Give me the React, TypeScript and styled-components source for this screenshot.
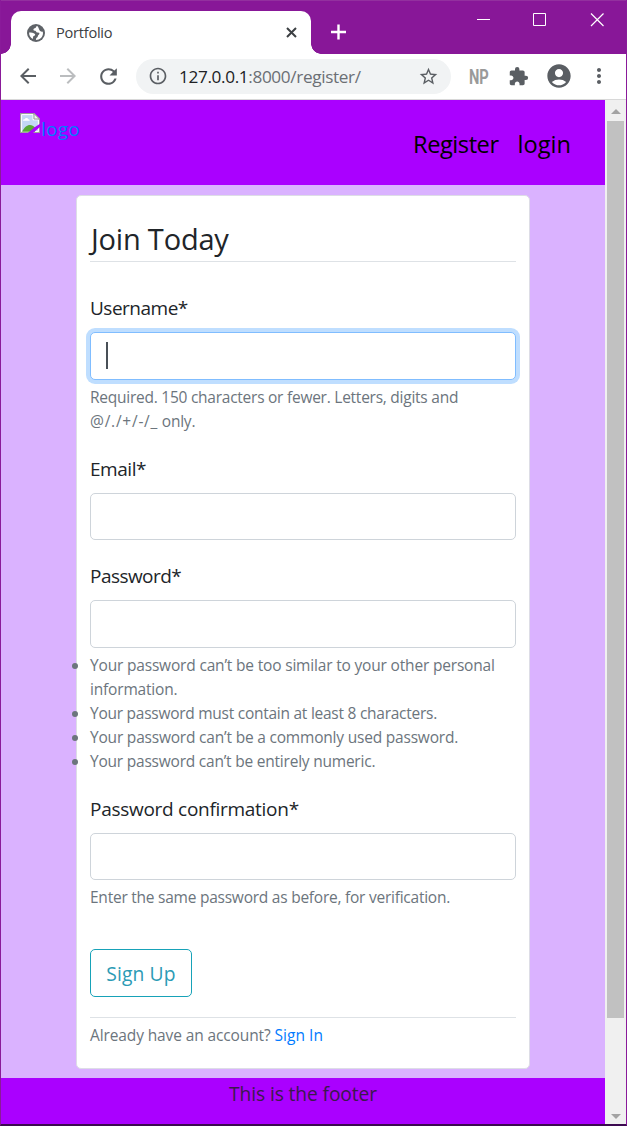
import React from 'react';
import styled, { createGlobalStyle } from 'styled-components';
import {
  MdAccountCircle,
  MdArrowBack,
  MdArrowForward,
  MdExtension,
  MdInfoOutline,
  MdMoreVert,
  MdRefresh,
  MdStarBorder,
} from 'react-icons/md';

const GlobalStyle = createGlobalStyle`
  * { box-sizing: border-box; }
  body {
    margin: 0;
    font-family: "Open Sans", "Noto Sans", sans-serif;
    color: #212529;
  }
  svg { display: block; flex: none; }
`;

const Window = styled.div`
  display: flex;
  flex-direction: column;
  width: 627px;
  height: 1126px;
  overflow: hidden;
  background: #881798;
  border: solid #8a1a9a;
  border-width: 0 1px;
  border-bottom: 2px solid #3c0a50;
`;

const TitleBar = styled.div`
  display: flex;
  height: 54px;
  padding-left: 10px;
  border-top: 1px solid #93309f;
`;

const Tab = styled.div`
  position: relative;
  display: flex;
  align-items: center;
  width: 300px;
  height: 43px;
  margin-top: 10px;
  padding: 0 14px;
  background: #fff;
  border-radius: 10px 10px 0 0;

  &::before,
  &::after {
    content: '';
    position: absolute;
    bottom: 0;
    width: 10px;
    height: 10px;
  }
  &::before {
    left: -10px;
    background: radial-gradient(circle at 0 0, transparent 9.5px, #fff 10px);
  }
  &::after {
    right: -10px;
    background: radial-gradient(circle at 100% 0, transparent 9.5px, #fff 10px);
  }
`;

const GlobeSlot = styled.span`
  margin: 0 2px;
`;

const TabTitle = styled.span`
  flex: 1;
  margin-left: 9px;
  padding-bottom: 2px;
  font-size: 14.6px;
  letter-spacing: -0.25px;
  color: #3c4043;
`;

const NewTab = styled.div`
  margin: 23px 0 0 19px;
`;

const Controls = styled.div`
  display: flex;
  gap: 42px;
  margin: 12px 21px 0 auto;
`;

const Toolbar = styled.div`
  display: flex;
  align-items: center;
  height: 46px;
  padding: 0 0 1px 15px;
  background: #fff;
  border-bottom: 1px solid #d8d8d8;
  color: #5a5e63;
`;

const NavButtons = styled.div`
  display: flex;
  align-items: center;
  gap: 16px;
`;

const AddressBar = styled.div`
  display: flex;
  align-items: center;
  width: 315px;
  height: 35px;
  margin-left: 15px;
  padding: 0 12px;
  border-radius: 18px;
  background: #f1f3f4;
`;

const Url = styled.span`
  flex: 1;
  margin-left: 11px;
  padding-top: 2px;
  font-size: 17.2px;
  line-height: 24px;
  letter-spacing: -0.36px;
  color: #6b6f74;
`;

const Host = styled.span`
  color: #202124;
`;

const Extensions = styled.div`
  display: flex;
  align-items: center;
  margin-left: 18px;
`;

const NpBadge = styled.span`
  width: 21px;
  margin-right: 18px;
  padding-top: 2px;
  font-family: "Roboto", sans-serif;
  font-size: 21px;
  font-weight: 700;
  line-height: 24px;
  color: #9a9a9a;
  transform: scaleX(0.7);
  transform-origin: left;
`;

const ProfileButton = styled.span`
  margin-left: 16px;
`;

const MenuButton = styled.span`
  margin-left: 14px;
`;

const Viewport = styled.div`
  display: flex;
  height: 1024px;
`;

const Page = styled.div`
  display: flex;
  flex-direction: column;
  width: 604px;
  background: #dab2ff;
`;

const Header = styled.header`
  display: flex;
  justify-content: space-between;
  height: 85px;
  padding: 13px 34px 0 19px;
  background: #aa00ff;
`;

const Logo = styled.a`
  display: flex;
  gap: 1px;
  font-size: 19px;
  line-height: 32px;
  letter-spacing: 0.25px;
  color: #007bff;
`;

const Nav = styled.nav`
  display: flex;
  gap: 19px;
  padding-top: 13px;
  font-size: 23.6px;
  line-height: 36px;
  color: #000;
`;

const NavLink = styled.a<{ $spacing: number }>`
  letter-spacing: ${(p) => p.$spacing}px;
`;

const Card = styled.main`
  width: 454px;
  height: 874px;
  margin: 10px 0 9px 75px;
  padding: 24px 13px 0;
  background: #fff;
  border: 1px solid #dddde6;
  border-radius: 5px;
`;

const Title = styled.h1`
  height: 42px;
  margin: 0 0 30px;
  padding-left: 1px;
  border-bottom: 1px solid #dee2e6;
  font-size: 29px;
  font-weight: 400;
  line-height: 38px;
  letter-spacing: -0.2px;
`;

const Field = styled.div<{ $gap: number }>`
  margin-bottom: ${(p) => p.$gap}px;
`;

const Label = styled.label<{ $spacing: number }>`
  display: block;
  height: 40px;
  padding-top: 1px;
  font-size: 19px;
  line-height: 30px;
  letter-spacing: ${(p) => p.$spacing}px;
`;

const Input = styled.div<{ $focused?: boolean; $height: number }>`
  display: flex;
  align-items: center;
  height: ${(p) => p.$height}px;
  padding: 0 15px;
  background: #fff;
  border: 1px solid ${(p) => (p.$focused ? '#80bdff' : '#ced4da')};
  border-radius: 5px;
  box-shadow: ${(p) => (p.$focused ? '0 0 0 4px #bfdeff' : 'none')};
`;

const Caret = styled.span`
  width: 2px;
  height: 27px;
  margin-bottom: 2px;
  background: #495057;
`;

const Help = styled.p<{ $spacing: number }>`
  margin: 5px 0 0;
  font-size: 15.5px;
  line-height: 24px;
  letter-spacing: ${(p) => p.$spacing}px;
  color: #6c757d;
`;

const Symbols = styled.span`
  letter-spacing: 0.75px;
`;

const Rules = styled.ul`
  margin: 5px 0 0;
  padding: 0;
  list-style: none;
  font-size: 15.5px;
  line-height: 24px;
  color: #6c757d;
`;

const Rule = styled.li<{ $spacing: number }>`
  display: flex;
  letter-spacing: ${(p) => p.$spacing}px;

  &::before {
    content: '';
    flex: none;
    width: 6px;
    height: 6px;
    margin: 10px 12px 0 -18px;
    border-radius: 50%;
    background: #6c757d;
  }
`;

const SubmitButton = styled.button`
  display: block;
  width: 102px;
  height: 48px;
  padding: 1px 0 0;
  background: #fff;
  border: 1px solid #17a2b8;
  border-radius: 5px;
  font: 400 19.3px/30px "Open Sans", "Noto Sans", sans-serif;
  letter-spacing: 0.1px;
  color: #2b9bb5;
`;

const SignIn = styled.div`
  margin-top: 20px;
  padding-top: 5px;
  border-top: 1px solid #dee2e6;
  font-size: 15.5px;
  line-height: 24px;
  letter-spacing: -0.12px;
  color: #6c757d;

  a {
    letter-spacing: 0.05px;
    color: #007bff;
  }
`;

const Footer = styled.footer`
  flex: 1;
  padding-top: 1px;
  background: #aa00ff;
  font-size: 19.2px;
  line-height: 30px;
  letter-spacing: -0.1px;
  text-align: center;
  color: #3a1a4c;
`;

const ScrollBar = styled.div`
  display: flex;
  flex-direction: column;
  align-items: center;
  justify-content: space-between;
  width: 21px;
  padding: 9px 0 5px;
  background: #f0f0f0;
`;

const Thumb = styled.div`
  width: 17px;
  height: 897px;
  margin: 7px 0 auto;
  background: #c1c1c1;
`;

const BrokenImage = () => (
  <svg width="20" height="20" viewBox="0 0 20 20">
    <path d="M0.6 0.6H14L19.4 6V19.4H0.6Z" fill="#c3d6f5" stroke="#9a9a9a" strokeWidth="1.2" />
    <path d="M1.6 1.6H13V6.8H18.4V18.6H1.6Z" fill="none" stroke="#fff" strokeWidth="1" />
    <path d="M3 7.8C3 6.5 4 6.1 4.8 6.3C5.2 4.5 7.8 4.4 8.2 6.2C9.4 6 9.8 7 9.6 7.8Z" fill="#fff" />
    <path d="M2 18.8C4 14.5 7 12 10 12C12 12 13.5 13 15 14.5V18.8Z" fill="#58a935" />
    <path d="M14 0.6V6H19.4Z" fill="#f4f4f4" stroke="#9a9a9a" />
    <path d="M20.2 10.5V13.8L12.8 20.2H7.6L14.6 14.2Z" fill="#aa00ff" />
  </svg>
);

const Globe = () => (
  <svg width="18" height="18" viewBox="0 0 18 18">
    <circle cx="9" cy="9" r="9" fill="#5f6368" />
    <path
      d="M10.3 2.1C9 2.2 9.2 3.5 8.4 4C7.4 4.5 6.5 4.6 6.4 5.7C6.4 6.7 7.5 6.5 8.3 6.7C9.4 7 9 8.3 10.2 8.6C11.5 8.9 12.2 8.4 12.4 9.5C12.5 10.7 11 10.9 10.9 12C10.8 12.9 10.3 13.4 9.6 13.8C8.9 14.3 9.2 15.2 8.9 16C13 16 16 12.9 16 9L15.7 7.5C14.5 8 13.4 7.4 12.7 6.5C11.8 5.5 11.9 3.8 10.3 2.1Z"
      fill="#fff"
    />
    <path
      d="M2.1 8.5C4 8.5 6.8 8.7 7.9 10C8.7 11.1 7.7 11.8 6.7 12.1C6 12.4 6.3 13.5 5.7 14.9C3.3 13.7 1.9 11.3 2.1 8.5Z"
      fill="#fff"
    />
  </svg>
);

const TabClose = () => (
  <svg width="11" height="11" viewBox="0 0 11 11" stroke="#3c4043" strokeWidth="2">
    <path d="M1 1L10 10M10 1L1 10" />
  </svg>
);

export default function App() {
  return (
    <>
      <GlobalStyle />
      <Window>
        <TitleBar>
          <Tab>
            <GlobeSlot>
              <Globe />
            </GlobeSlot>
            <TabTitle>Portfolio</TabTitle>
            <TabClose />
          </Tab>
          <NewTab>
            <svg width="16" height="16" viewBox="0 0 16 16" stroke="#fff" strokeWidth="2.4">
              <path d="M8.5 0.5V15.5M1 8H16" />
            </svg>
          </NewTab>
          <Controls>
            <svg width="15" height="14" viewBox="0 0 15 14" stroke="#fff">
              <path d="M1 6.5H14" />
            </svg>
            <svg width="15" height="14" viewBox="0 0 15 14" stroke="#fff" fill="none">
              <path d="M0.5 0.5H12.5V12.5H0.5Z" />
            </svg>
            <svg width="15" height="14" viewBox="0 0 15 14" stroke="#fff" strokeWidth="1.2">
              <path d="M1 0.5L13.5 13M13.5 0.5L1 13" />
            </svg>
          </Controls>
        </TitleBar>
        <Toolbar>
          <NavButtons>
            <MdArrowBack size={24} />
            <MdArrowForward size={24} color="#bbbdbf" />
            <MdRefresh size={25} />
          </NavButtons>
          <AddressBar>
            <MdInfoOutline size={20} />
            <Url>
              <Host>127.0.0.1</Host>:8000/register/
            </Url>
            <MdStarBorder size={21} />
          </AddressBar>
          <Extensions>
            <NpBadge>NP</NpBadge>
            <MdExtension size={21} />
            <ProfileButton>
              <MdAccountCircle size={28} />
            </ProfileButton>
            <MenuButton>
              <MdMoreVert size={24} />
            </MenuButton>
          </Extensions>
        </Toolbar>
        <Viewport>
          <Page>
            <Header>
              <Logo>
                <BrokenImage />
                logo
              </Logo>
              <Nav>
                <NavLink $spacing={-0.45}>Register</NavLink>
                <NavLink $spacing={0}>login</NavLink>
              </Nav>
            </Header>
            <Card>
              <Title>Join Today</Title>
              <Field $gap={20}>
                <Label $spacing={-0.5}>Username*</Label>
                <Input $focused $height={48}>
                  <Caret />
                </Input>
                <Help $spacing={-0.25}>
                  Required. 150 characters or fewer. Letters, digits and
                  <br />
                  <Symbols>@/./+/-/_</Symbols> only.
                </Help>
              </Field>
              <Field $gap={20}>
                <Label $spacing={-0.45}>Email*</Label>
                <Input $height={47} />
              </Field>
              <Field $gap={20}>
                <Label $spacing={-0.55}>Password*</Label>
                <Input $height={48} />
                <Rules>
                  <Rule $spacing={-0.18}>
                    <span>
                      Your password can’t be too similar to your other personal
                      <br />
                      information.
                    </span>
                  </Rule>
                  <Rule $spacing={-0.26}>Your password must contain at least 8 characters.</Rule>
                  <Rule $spacing={-0.2}>Your password can’t be a commonly used password.</Rule>
                  <Rule $spacing={-0.22}>Your password can’t be entirely numeric.</Rule>
                </Rules>
              </Field>
              <Field $gap={40}>
                <Label $spacing={-0.28}>Password confirmation*</Label>
                <Input $height={47} />
                <Help $spacing={-0.24}>Enter the same password as before, for verification.</Help>
              </Field>
              <SubmitButton>Sign Up</SubmitButton>
              <SignIn>
                Already have an account? <a>Sign In</a>
              </SignIn>
            </Card>
            <Footer>This is the footer</Footer>
          </Page>
          <ScrollBar>
            <svg width="10" height="5" viewBox="0 0 10 5" fill="#a3a3a3">
              <path d="M0 5L5 0L10 5Z" />
            </svg>
            <Thumb />
            <svg width="10" height="5" viewBox="0 0 10 5" fill="#a3a3a3">
              <path d="M0 0H10L5 5Z" />
            </svg>
          </ScrollBar>
        </Viewport>
      </Window>
    </>
  );
}
